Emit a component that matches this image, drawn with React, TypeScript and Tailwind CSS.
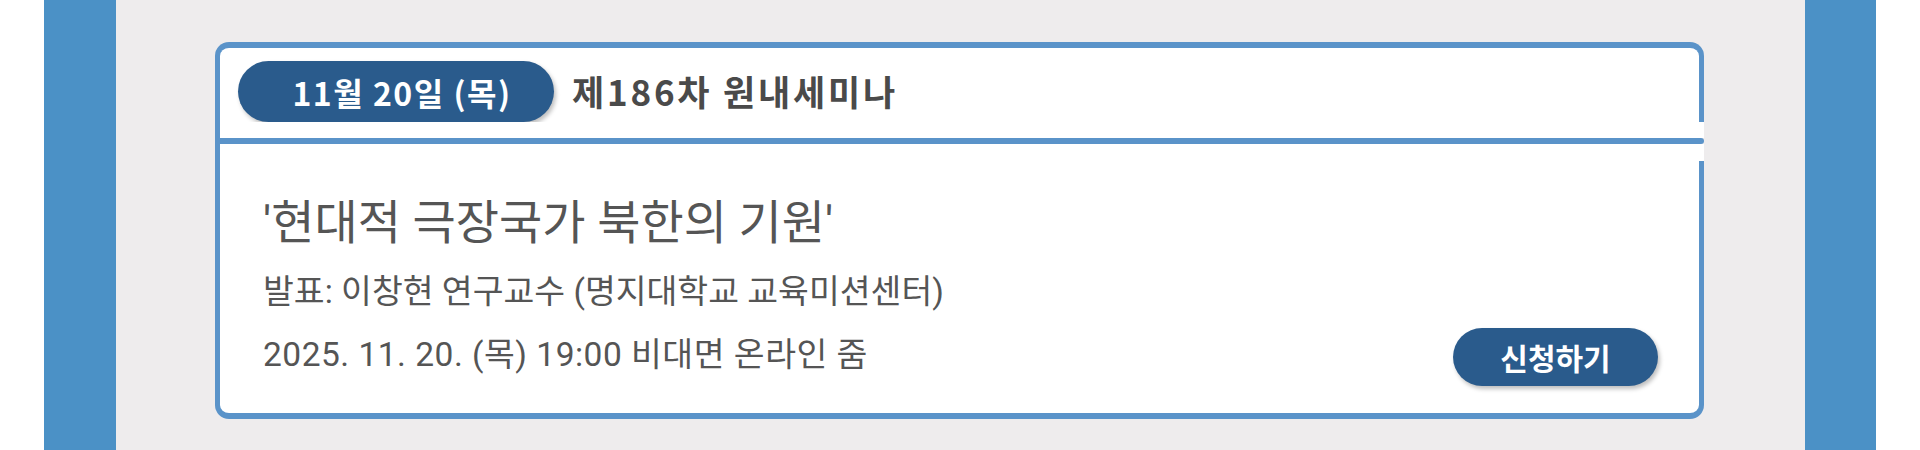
import React from 'react';

const BORDER = 'border-[#5a93c9]';

export default function App() {
  return (
    <div className="flex h-[450px] w-full bg-white px-[44px]">
      <div className="w-[72px] shrink-0 bg-[#4b91c6]" />

      <div className="flex-1 bg-[#eeeced] pt-[42px] pl-[99px]">
        <div className="flex w-[1489px] flex-col">
          {/* header */}
          <div
            className={`flex h-[80px] items-start gap-[18px] rounded-t-[14px] border-x-[5px] border-t-[6px] bg-white pt-[13px] pl-[18px] ${BORDER}`}
          >
            <div className="flex h-[61px] w-[316px] items-center justify-center rounded-full bg-[#2a5b8c] pl-[12px] shadow-[2px_3px_4px_rgba(0,0,0,0.25)]">
              <span className="font-['Noto_Sans_CJK_KR',sans-serif] text-[32px] font-bold tracking-[1.5px] text-white">
                11월 20일 (목)
              </span>
            </div>
            <h2 className="flex h-[61px] items-center font-['Noto_Sans_CJK_KR',sans-serif] text-[35px] font-bold tracking-[2.8px] text-[#4a4a4a]">
              제186차 원내세미나
            </h2>
          </div>

          <div className={`h-[16px] border-l-[5px] bg-white ${BORDER}`} />
          <div className="h-[6px] rounded-r-full bg-[#5a93c9]" />
          <div className={`h-[17px] border-l-[5px] bg-white ${BORDER}`} />

          {/* body */}
          <div
            className={`flex h-[258px] items-end justify-between rounded-b-[14px] border-x-[5px] border-b-[6px] bg-white pb-[27px] pl-[43px] pr-[41px] ${BORDER}`}
          >
            <div className="mb-[9px] flex flex-col font-['Roboto','Noto_Sans_CJK_KR',sans-serif] text-[#555]">
              <p className="text-[47px] leading-[56px]">'현대적 극장국가 북한의 기원'</p>
              <p className="mt-[19px] text-[33.5px] leading-[44px]">발표: 이창현 연구교수 (명지대학교 교육미션센터)</p>
              <p className="mt-[19px] text-[33.5px] leading-[44px] tracking-[0.5px]">2025. 11. 20. (목) 19:00 비대면 온라인 줌</p>
            </div>
            <button className="flex h-[58px] w-[205px] items-center justify-center rounded-full bg-[#2a5b8c] font-['Noto_Sans_CJK_KR',sans-serif] text-[30px] font-bold text-white shadow-[2px_3px_4px_rgba(0,0,0,0.25)]">
              신청하기
            </button>
          </div>
        </div>
      </div>

      <div className="w-[71px] shrink-0 bg-[#4b91c6]" />
    </div>
  );
}
